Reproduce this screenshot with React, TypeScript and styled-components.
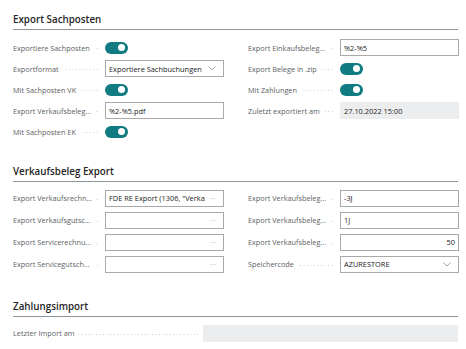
import React from "react";
import styled, { createGlobalStyle } from "styled-components";

const Global = createGlobalStyle`
  html, body { margin: 0; padding: 0; background: #ffffff; }
  body { font-family: "Open Sans", "Noto Sans", sans-serif; }
`;

const Page = styled.div`
  width: 466px;
  height: 349px;
  overflow: hidden;
  padding: 13px 8px 0 13px;
  box-sizing: border-box;
`;

const Section = styled.section<{ $gap?: number }>`
  margin-bottom: ${(p) => p.$gap ?? 0}px;
`;

const Header = styled.h2`
  margin: 0;
  font-size: 9.8px;
  line-height: 14px;
  font-weight: 600;
  color: #262626;
  padding-bottom: 2px;
  border-bottom: 1px solid #8d949b;
`;

const Columns = styled.div<{ $top: number }>`
  display: grid;
  grid-template-columns: 211px 211px;
  column-gap: 24px;
  padding-top: ${(p) => p.$top}px;
`;

const Column = styled.div`
  display: flex;
  flex-direction: column;
`;

const Row = styled.div<{ $h: number }>`
  display: flex;
  align-items: center;
  height: ${(p) => p.$h}px;
`;

const LabelWrap = styled.div<{ $w?: number }>`
  display: flex;
  align-items: center;
  width: ${(p) => p.$w ?? 92}px;
  flex: none;
  padding-right: 5px;
  box-sizing: border-box;
`;

const Label = styled.span`
  font-size: 7.3px;
  color: #5c5f63;
  white-space: nowrap;
  flex: none;
`;

const Dots = styled.span`
  flex: 1;
  height: 1px;
  margin-left: 4px;
  margin-top: 2px;
  background-image: linear-gradient(to right, #c8c8c8 1px, transparent 1px);
  background-size: 3.5px 1px;
  background-position: right;
`;

const Field = styled.div<{ $align?: string; $ro?: boolean }>`
  flex: 1;
  min-width: 0;
  height: 17px;
  box-sizing: border-box;
  border: 1px solid ${(p) => (p.$ro ? "transparent" : "#a9a9a9")};
  background: ${(p) => (p.$ro ? "#ecedee" : "#ffffff")};
  display: flex;
  align-items: center;
  justify-content: ${(p) => p.$align ?? "flex-start"};
  padding: 0 3px 0 3px;
  font-size: 7.4px;
  color: #222222;
  white-space: nowrap;
  overflow: hidden;
`;

const FieldText = styled.span`
  flex: 1;
  min-width: 0;
  overflow: hidden;
  white-space: nowrap;
`;

const Ellip = styled.span`
  color: #8a8a8a;
  font-size: 7px;
  letter-spacing: 0.5px;
  margin-left: 4px;
  margin-right: 3px;
  flex: none;
`;

const Chevron = styled.svg`
  flex: none;
  margin-right: 4px;
`;

const Toggle = styled.span`
  width: 23px;
  height: 12px;
  border-radius: 6px;
  background: #117b82;
  position: relative;
  flex: none;
  &::after {
    content: "";
    position: absolute;
    right: 3px;
    top: 2.5px;
    width: 7px;
    height: 7px;
    border-radius: 50%;
    background: #ffffff;
  }
`;

const Down = () => (
  <Chevron width="8" height="5" viewBox="0 0 8 5">
    <polyline points="0.5,0.5 4,4 7.5,0.5" fill="none" stroke="#8a8a8a" strokeWidth="0.8" />
  </Chevron>
);

type Kind =
  | { t: "toggle" }
  | { t: "text"; v: string; align?: string }
  | { t: "select"; v: string }
  | { t: "lookup"; v: string }
  | { t: "ro"; v: string };

type Item = { label: string; k: Kind };

const Control = ({ k }: { k: Kind }) => {
  switch (k.t) {
    case "toggle":
      return <Toggle />;
    case "text":
      return (
        <Field $align={k.align}>
          <span>{k.v}</span>
        </Field>
      );
    case "select":
      return (
        <Field>
          <FieldText>{k.v}</FieldText>
          <Down />
        </Field>
      );
    case "lookup":
      return (
        <Field>
          <FieldText>{k.v}</FieldText>
          <Ellip>···</Ellip>
        </Field>
      );
    case "ro":
      return (
        <Field $ro>
          <span>{k.v}</span>
        </Field>
      );
  }
};

const Col = ({ items, h }: { items: Item[]; h: number }) => (
  <Column>
    {items.map((it, i) => (
      <Row key={i} $h={h}>
        <LabelWrap>
          <Label>{it.label}</Label>
          <Dots />
        </LabelWrap>
        <Control k={it.k} />
      </Row>
    ))}
  </Column>
);

const s1Left: Item[] = [
  { label: "Exportiere Sachposten", k: { t: "toggle" } },
  { label: "Exportformat", k: { t: "select", v: "Exportiere Sachbuchungen" } },
  { label: "Mit Sachposten VK", k: { t: "toggle" } },
  { label: "Export Verkaufsbeleg...", k: { t: "text", v: "%2-%5.pdf" } },
  { label: "Mit Sachposten EK", k: { t: "toggle" } },
];

const s1Right: Item[] = [
  { label: "Export Einkaufsbeleg...", k: { t: "text", v: "%2-%5" } },
  { label: "Export Belege in .zip", k: { t: "toggle" } },
  { label: "Mit Zahlungen", k: { t: "toggle" } },
  { label: "Zuletzt exportiert am", k: { t: "ro", v: "27.10.2022 15:00" } },
];

const s2Left: Item[] = [
  { label: "Export Verkaufsrechn...", k: { t: "lookup", v: "FDE RE Export (1306, \"Verka" } },
  { label: "Export Verkaufsgutsc...", k: { t: "lookup", v: "" } },
  { label: "Export Servicerechnu...", k: { t: "lookup", v: "" } },
  { label: "Export Servicegutsch...", k: { t: "lookup", v: "" } },
];

const s2Right: Item[] = [
  { label: "Export Verkaufsbeleg...", k: { t: "text", v: "-3J" } },
  { label: "Export Verkaufsbeleg...", k: { t: "text", v: "1J" } },
  { label: "Export Verkaufsbeleg...", k: { t: "text", v: "50", align: "flex-end" } },
  { label: "Speichercode", k: { t: "select", v: "AZURESTORE" } },
];

const WideRow = styled.div`
  display: flex;
  align-items: center;
  height: 22px;
  padding-top: 5px;
`;

const WideField = styled.div`
  flex: 1;
  height: 17px;
  background: #ecedee;
`;

export default function App() {
  return (
    <Page>
      <Global />
      <Section $gap={23}>
        <Header>Export Sachposten</Header>
        <Columns $top={7}>
          <Col items={s1Left} h={21} />
          <Col items={s1Right} h={21} />
        </Columns>
      </Section>
      <Section $gap={25}>
        <Header>Verkaufsbeleg Export</Header>
        <Columns $top={5}>
          <Col items={s2Left} h={22} />
          <Col items={s2Right} h={22} />
        </Columns>
      </Section>
      <Section>
        <Header>Zahlungsimport</Header>
        <WideRow>
          <LabelWrap $w={190}>
            <Label>Letzter Import am</Label>
            <Dots />
          </LabelWrap>
          <WideField />
        </WideRow>
      </Section>
    </Page>
  );
}
